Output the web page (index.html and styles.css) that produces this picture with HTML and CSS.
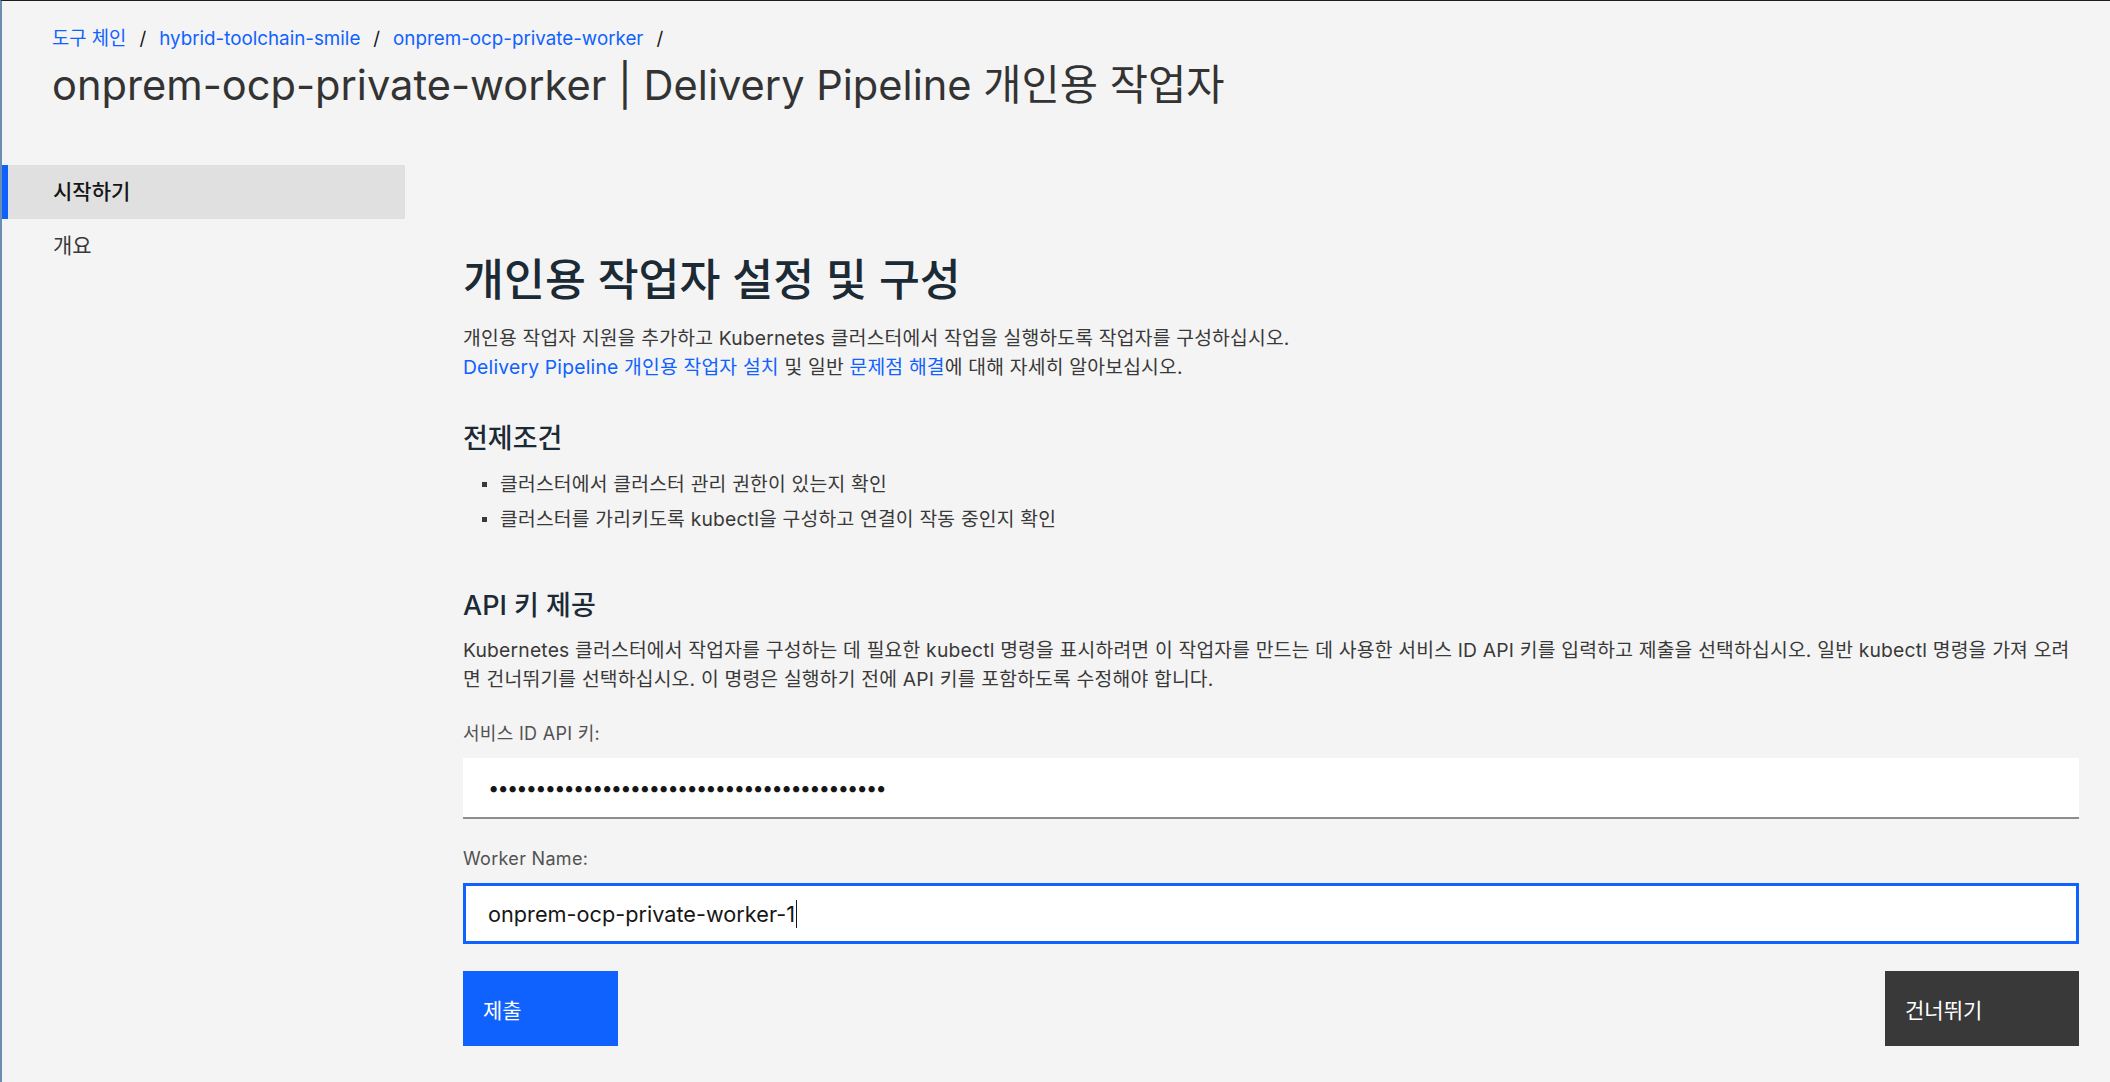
FILE: index.html
```html
<!DOCTYPE html>
<html lang="ko">
<head>
    <meta charset="UTF-8">
    <meta name="viewport" content="width=device-width, initial-scale=1.0">
    <title>Delivery Pipeline 개인용 작업자</title>
    <link rel="stylesheet" href="styles.css">
</head>
<body>
    <div class="window">
        <header class="page-header">
            <nav class="breadcrumb">
                <a href="#" class="crumb">도구 체인</a>
                <span class="crumb-sep">/</span>
                <a href="#" class="crumb">hybrid-toolchain-smile</a>
                <span class="crumb-sep">/</span>
                <a href="#" class="crumb">onprem-ocp-private-worker</a>
                <span class="crumb-sep">/</span>
            </nav>
            <h1 class="page-title">onprem-ocp-private-worker | Delivery Pipeline 개인용 작업자</h1>
        </header>

        <div class="layout">
            <aside class="side-nav">
                <a href="#" class="nav-item active">시작하기</a>
                <a href="#" class="nav-item">개요</a>
            </aside>

            <main class="content">
                <h2 class="section-title">개인용 작업자 설정 및 구성</h2>
                <p class="intro">
                    개인용 작업자 지원을 추가하고 Kubernetes 클러스터에서 작업을 실행하도록 작업자를 구성하십시오.<br>
                    <a href="#">Delivery Pipeline 개인용 작업자 설치</a> 및 일반 <a href="#">문제점 해결</a>에 대해 자세히 알아보십시오.
                </p>

                <h3 class="sub-title">전제조건</h3>
                <ul class="prereq-list">
                    <li>클러스터에서 클러스터 관리 권한이 있는지 확인</li>
                    <li>클러스터를 가리키도록 kubectl을 구성하고 연결이 작동 중인지 확인</li>
                </ul>

                <h3 class="sub-title api-title">API 키 제공</h3>
                <p class="api-text">Kubernetes 클러스터에서 작업자를 구성하는 데 필요한 kubectl 명령을 표시하려면 이 작업자를 만드는 데 사용한 서비스 ID API 키를 입력하고 제출을 선택하십시오. 일반 kubectl 명령을 가져 오려면 건너뛰기를 선택하십시오. 이 명령은 실행하기 전에 API 키를 포함하도록 수정해야 합니다.</p>

                <div class="form-item">
                    <label class="field-label">서비스 ID API 키:</label>
                    <div class="field-box">
                        <span class="field-dots">••••••••••••••••••••••••••••••••••••••••••</span>
                    </div>
                </div>

                <div class="form-item">
                    <label class="field-label">Worker Name:</label>
                    <div class="field-box focused">
                        <span class="field-value">onprem-ocp-private-worker-1</span><span class="caret"></span>
                    </div>
                </div>

                <div class="actions">
                    <button class="btn btn-primary">제출</button>
                    <button class="btn btn-secondary">건너뛰기</button>
                </div>
            </main>
        </div>
    </div>
</body>
</html>
```

FILE: styles.css
```css
* {
    margin: 0;
    padding: 0;
    box-sizing: border-box;
}

:root {
    --blue: #0f62fe;
    --bg: #f4f4f4;
    --text: #393939;
    --heading: #1c2a35;
    --label: #525252;
}

body {
    font-family: Inter, "Noto Sans CJK KR", sans-serif;
    background: var(--bg);
    color: var(--text);
    width: 2110px;
    height: 1082px;
    overflow: hidden;
}

a {
    color: var(--blue);
    text-decoration: none;
}

.window {
    height: 1082px;
    border-top: 1px solid #1e1e1e;
    border-left: 2px solid #6b8db3;
}

/* header */
.page-header {
    padding: 25px 0 0 50px;
}

.breadcrumb {
    display: flex;
    align-items: center;
    gap: 13px;
    font-size: 18.8px;
    line-height: 26px;
}

.crumb-sep {
    color: #161616;
}

.page-title {
    margin-top: 8px;
    font-size: 41.6px;
    line-height: 50px;
    font-weight: 400;
    color: #333;
}

/* body */
.layout {
    display: flex;
    margin-top: 55px;
}

.side-nav {
    width: 403px;
    flex-shrink: 0;
}

.nav-item {
    display: block;
    height: 54px;
    line-height: 54px;
    padding-left: 45px;
    border-left: 6px solid transparent;
    font-size: 21px;
    color: #393939;
}

.nav-item.active {
    background: #e0e0e0;
    border-left-color: var(--blue);
    color: #161616;
    font-weight: 500;
}

.content {
    flex: 1;
    padding: 87px 31px 0 58px;
}

.section-title {
    font-size: 44.5px;
    line-height: 56px;
    font-weight: 500;
    color: var(--heading);
}

.intro {
    margin-top: 16px;
    font-size: 19.3px;
    line-height: 28.5px;
    letter-spacing: 0.2px;
}

.sub-title {
    margin-top: 40px;
    font-size: 27px;
    line-height: 36px;
    font-weight: 500;
    color: var(--heading);
}

.prereq-list {
    list-style: none;
    margin-top: 13px;
}

.prereq-list li {
    display: flex;
    align-items: center;
    font-size: 19.3px;
    line-height: 28px;
    letter-spacing: 0.2px;
    margin-bottom: 7px;
}

.prereq-list li::before {
    content: '';
    width: 5px;
    height: 5px;
    background: #393939;
    margin: 0 13px 0 19px;
    flex-shrink: 0;
}

.api-title {
    margin-top: 55px;
}

.api-text {
    margin-top: 12px;
    font-size: 19.3px;
    line-height: 29px;
    letter-spacing: 0.2px;
}

.form-item {
    margin-top: 29px;
}

.field-label {
    display: block;
    font-size: 18px;
    line-height: 22px;
    letter-spacing: 0.3px;
    color: var(--label);
}

.field-box {
    margin-top: 13px;
    height: 61px;
    background: #fff;
    border-bottom: 2px solid #8d8d8d;
    padding-left: 25px;
    display: flex;
    align-items: center;
    font-size: 21.7px;
    color: #161616;
}

.field-dots {
    letter-spacing: -1.8px;
    font-size: 20px;
}

.field-box.focused {
    border: 3px solid var(--blue);
    padding-left: 22px;
}

.caret {
    width: 1px;
    height: 28px;
    background: #161616;
    margin-left: 1px;
}

.actions {
    display: flex;
    justify-content: space-between;
    margin-top: 27px;
}

.btn {
    height: 75px;
    border: none;
    color: #fff;
    font-family: inherit;
    font-size: 21px;
    text-align: left;
    padding-left: 20px;
    cursor: pointer;
}

.btn-primary {
    width: 155px;
    background: var(--blue);
}

.btn-secondary {
    width: 194px;
    background: #393939;
}
```
